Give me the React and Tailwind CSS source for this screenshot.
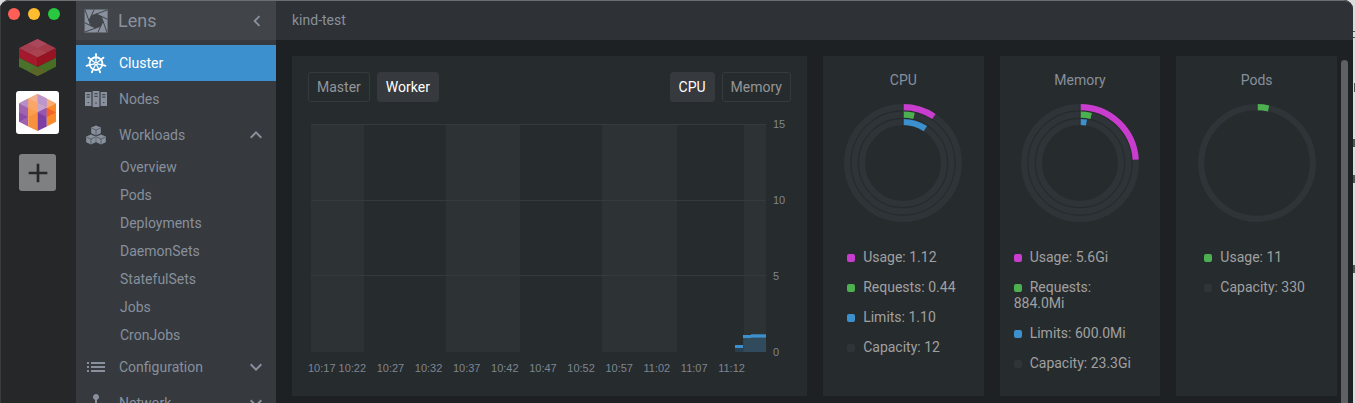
import React from "react";
import {
  MdAdd,
  MdDeviceHub,
  MdKeyboardArrowDown,
  MdKeyboardArrowLeft,
  MdKeyboardArrowUp,
  MdList,
} from "react-icons/md";

function LensLogo() {
  const blades = [0, 45, 90, 135, 180, 225, 270, 315];
  return (
    <svg viewBox="0 0 24 24" className="size-6 shrink-0" aria-hidden="true">
      <defs>
        <clipPath id="logo-square">
          <rect x="0.6" y="0.6" width="23" height="23" />
        </clipPath>
      </defs>
      <g clipPath="url(#logo-square)">
        <rect width="24" height="24" fill="#8a919e" />
        <g transform="rotate(-20 12 12)">
          <polygon points="9.3,5.5 14.7,5.5 18.5,9.3 18.5,14.7 14.7,18.5 9.3,18.5 5.5,14.7 5.5,9.3" fill="#414448" />
          {blades.map((a) => (
            <path key={a} d="M9.3 5.5H28" stroke="#414448" strokeWidth="0.9" transform={`rotate(${a} 12 12)`} />
          ))}
        </g>
      </g>
    </svg>
  );
}

function WheelIcon() {
  const spokes = [0, 1, 2, 3, 4, 5, 6];
  return (
    <svg viewBox="0 0 24 24" className="size-6" fill="none" stroke="currentColor" aria-hidden="true">
      <circle cx="12" cy="12.6" r="6.4" strokeWidth="1.9" />
      {spokes.map((i) => (
        <g key={i} transform={`rotate(${(i * 360) / 7} 12 12.6)`}>
          <path d="M12 11V2.9" strokeWidth="1.3" />
          <path d="M12 4.6V2.9" strokeWidth="1.7" strokeLinecap="round" />
        </g>
      ))}
      <circle cx="12" cy="12.6" r="1.9" fill="currentColor" stroke="none" />
      <circle cx="12" cy="12.6" r="0.7" fill="#3d90ce" stroke="none" />
    </svg>
  );
}

function ServersIcon() {
  return (
    <svg viewBox="0 0 24 24" className="size-6" fill="currentColor" aria-hidden="true">
      <rect x="1" y="5" width="6.4" height="14" rx="0.5" />
      <rect x="8.6" y="4" width="6.8" height="16" rx="0.5" />
      <rect x="16.6" y="5" width="6.4" height="14" rx="0.5" />
      <g fill="#36393e">
        <rect x="2.6" y="7.2" width="3.2" height="1" />
        <rect x="2.6" y="9.6" width="3.2" height="1" />
        <rect x="10.4" y="6.2" width="3.2" height="1" />
        <rect x="10.4" y="8.8" width="3.2" height="1" />
        <rect x="18.2" y="7.2" width="3.2" height="1" />
        <rect x="18.2" y="9.6" width="3.2" height="1" />
        <circle cx="4.2" cy="15.6" r="0.7" />
        <circle cx="12" cy="16" r="0.7" />
        <circle cx="19.8" cy="15.6" r="0.7" />
      </g>
    </svg>
  );
}

function CubesIcon() {
  const spots = ["translate(12 7.4)", "translate(7 16.4)", "translate(17 16.4)"];
  return (
    <svg viewBox="0 0 24 24" className="size-6" aria-hidden="true">
      {spots.map((t) => (
        <g key={t} transform={t}>
          <path d="M0-5 4.8-2.8V2.8L0 5-4.8 2.8V-2.8Z" fill="currentColor" />
          <path d="M-4-2.2 0-.3 4-2.2M0-.3V4.6" fill="none" stroke="#36393e" strokeWidth="0.55" />
        </g>
      ))}
    </svg>
  );
}

function RedGreenCube() {
  return (
    <svg viewBox="0 0 37 37" className="size-[37px]" aria-hidden="true">
      <path d="M18.5 0 37 9.2 18.5 18.5 0 9.2Z" fill="#a23a4a" />
      <path d="M18.5 0 27.8 4.6 18.5 9.2 9.2 4.6Z" fill="#a9485a" />
      <path d="M9.2 4.6 18.5 9.2 9.2 13.8 0 9.2Z" fill="#a33f50" />
      <path d="M18.5 9.2 27.8 13.8 18.5 18.5 9.2 13.8Z" fill="#a94350" />
      <path d="M0 9.2 18.5 18.5V28L0 18.8Z" fill="#a41a2c" />
      <path d="M37 9.2 18.5 18.5V28L37 18.8Z" fill="#981321" />
      <path d="M0 18.8 18.5 28V37L0 27.8Z" fill="#4a722a" />
      <path d="M37 18.8 18.5 28V37L37 27.8Z" fill="#466e24" />
      <path d="M9.2 32.4 18.5 28 27.8 32.4 18.5 37Z" fill="#5a6528" />
    </svg>
  );
}

function OrangePurpleCube() {
  return (
    <svg viewBox="0 0 37 37" className="size-[37px]" aria-hidden="true">
      <path d="M18.5 0 37 9.2 18.5 18.5 0 9.2Z" fill="#f9a972" />
      <path d="M18.5 0 27.8 4.6 18.5 9.2 9.2 4.6Z" fill="#f5b28c" />
      <path d="M18.5 0 27.8 4.6V13.8L18.5 9.2Z" fill="#bb96cf" />
      <path d="M9.2 4.6 18.5 9.2V18.5L9.2 13.8Z" fill="#fba668" />
      <path d="M18.5 9.2 27.8 13.8 18.5 18.5Z" fill="#c7a2cf" />
      <path d="M0 9.2 9.2 4.6V13.8Z" fill="#b48fc8" />
      <path d="M0 9.2 9.2 13.8V32.4L0 27.8Z" fill="#9f63b0" />
      <path d="M0 18.5 9.2 23 0 27.8Z" fill="#8b4ba6" />
      <path d="M9.2 13.8 18.5 18.5V37L9.2 32.4Z" fill="#f8913d" />
      <path d="M9.2 13.8 18.5 18.5 9.2 23Z" fill="#fa9e4d" />
      <path d="M18.5 18.5 27.8 13.8V32.4L18.5 37Z" fill="#7d3fa4" />
      <path d="M18.5 18.5 27.8 13.8V23Z" fill="#9656b4" />
      <path d="M27.8 13.8 37 9.2V27.8L27.8 32.4Z" fill="#f98a2c" />
      <path d="M27.8 13.8 37 18.5 27.8 23Z" fill="#f4622b" />
    </svg>
  );
}

function Rail() {
  return (
    <aside className="flex w-[76px] shrink-0 flex-col items-center border-l border-[#3a3b3d] bg-[#252729] pr-0.5">
      <div className="flex gap-2 self-start pt-2 pl-[7px]">
        <button aria-label="Close" className="size-3 rounded-full bg-[#ff5f57]" />
        <button aria-label="Minimize" className="size-3 rounded-full bg-[#febc2e]" />
        <button aria-label="Zoom" className="size-3 rounded-full bg-[#28c840]" />
      </div>
      <button aria-label="Open first cluster" className="mt-[19px]">
        <RedGreenCube />
      </button>
      <button aria-label="Open kind-test" className="mt-[15px] rounded-[3px] bg-white p-[3px]">
        <OrangePurpleCube />
      </button>
      <button
        aria-label="Add cluster"
        className="mt-5 flex size-[37px] items-center justify-center rounded-[3px] bg-[#7f8082] text-[#252729]"
      >
        <MdAdd className="size-8" />
      </button>
    </aside>
  );
}

function NavItem({ icon, label, active, arrow }) {
  return (
    <a
      href="#"
      className={
        "flex h-9 items-center gap-[11px] px-2 " + (active ? "bg-[#3d90ce] text-white" : "text-[#87909c]")
      }
    >
      <span className="flex size-6 items-center justify-center">{icon}</span>
      <span className="flex-1">{label}</span>
      {arrow}
    </a>
  );
}

const workloads = ["Overview", "Pods", "Deployments", "DaemonSets", "StatefulSets", "Jobs", "CronJobs"];

function Sidebar() {
  return (
    <nav className="flex w-[200px] shrink-0 flex-col overflow-hidden bg-[#36393e]">
      <div className="flex h-10 shrink-0 items-center bg-[#414448] px-2 pt-0.5 text-[#8a919e]">
        <LensLogo />
        <span className="flex-1 pl-2.5 text-lg">Lens</span>
        <button aria-label="Collapse sidebar">
          <MdKeyboardArrowLeft className="size-[22px]" />
        </button>
      </div>
      <div className="flex flex-col pt-[5px]">
        <NavItem icon={<WheelIcon />} label="Cluster" active />
        <NavItem icon={<ServersIcon />} label="Nodes" />
        <NavItem icon={<CubesIcon />} label="Workloads" arrow={<MdKeyboardArrowUp className="size-6" />} />
        {workloads.map((w) => (
          <a key={w} href="#" className="flex h-7 items-center pl-11 text-[#87909c]">
            {w}
          </a>
        ))}
        <NavItem
          icon={<MdList className="size-6" />}
          label="Configuration"
          arrow={<MdKeyboardArrowDown className="size-6" />}
        />
        <NavItem
          icon={<MdDeviceHub className="size-6" />}
          label="Network"
          arrow={<MdKeyboardArrowDown className="size-6" />}
        />
      </div>
    </nav>
  );
}

function Toggle({ children, active }) {
  return (
    <button
      aria-pressed={!!active}
      className={
        "h-[30px] rounded-[3px] border px-2 " +
        (active ? "border-[#36393e] bg-[#36393e] text-white" : "border-[#36393e] text-[#949698]")
      }
    >
      {children}
    </button>
  );
}

const times = ["10:22", "10:27", "10:32", "10:37", "10:42", "10:47", "10:52", "10:57", "11:02", "11:07", "11:12"];

function MetricsChart() {
  return (
    <section className="bg-[#262b2e] px-4 pt-4 pb-5">
      <div className="flex justify-between">
        <div className="flex gap-[7px]">
          <Toggle>Master</Toggle>
          <Toggle active>Worker</Toggle>
        </div>
        <div className="flex gap-[7px]">
          <Toggle active>CPU</Toggle>
          <Toggle>Memory</Toggle>
        </div>
      </div>
      <div className="mt-[22px] flex font-['Liberation_Sans',sans-serif] text-[11px] text-[#7f8590]">
        <svg
          viewBox="0 0 455 228"
          preserveAspectRatio="none"
          shapeRendering="crispEdges"
          className="ml-[3px] h-[228px] min-w-0 flex-1"
          role="img"
          aria-label="CPU usage"
        >
          <g fill="#2d3235">
            <rect x="0" y="0" width="53" height="228" />
            <rect x="135" y="0" width="74" height="228" />
            <rect x="291" y="0" width="75" height="228" />
            <rect x="433" y="0" width="22" height="228" />
          </g>
          <g fill="#36393e">
            <rect y="0" width="455" height="1" />
            <rect y="76" width="455" height="1" />
            <rect y="151" width="455" height="1" />
          </g>
          <g fill="#3d90ce">
            <rect x="424" y="223" width="8" height="5" fillOpacity="0.2" />
            <rect x="432" y="214" width="23" height="14" fillOpacity="0.26" />
            <rect x="424" y="221" width="8" height="3" />
            <rect x="432" y="211" width="8" height="3" />
            <rect x="440" y="210" width="15" height="4" fillOpacity="0.7" />
            <rect x="440" y="211" width="15" height="2" />
          </g>
        </svg>
        <div className="-my-2 flex w-[25px] flex-col justify-between pl-[7px] leading-4">
          <span>15</span>
          <span>10</span>
          <span>5</span>
          <span>0</span>
        </div>
      </div>
      <div className="mt-2 flex gap-[3px] pr-[46px] font-['Liberation_Sans',sans-serif] text-[11px] leading-4 text-[#7f8590]">
        <span>10:17</span>
        <div className="flex flex-1 justify-between">
          {times.map((t) => (
            <span key={t}>{t}</span>
          ))}
        </div>
      </div>
    </section>
  );
}

function arc(radius, share) {
  const a = share * 2 * Math.PI;
  const x = 59 + radius * Math.sin(a);
  const y = 59 - radius * Math.cos(a);
  return `M59 ${59 - radius}A${radius} ${radius} 0 ${share > 0.5 ? 1 : 0} 1 ${x} ${y}`;
}

function Gauge({ title, rings, legend }) {
  return (
    <section className="flex min-w-0 flex-col items-center bg-[#262b2e] px-3.5 pt-3.5 text-[#a0a0a0]">
      <h2 className="leading-5 text-[#87909c]">{title}</h2>
      <svg viewBox="0 0 118 118" className="mt-3.5 size-[118px]" fill="none" role="img" aria-label={title}>
        {rings.map((r, i) => (
          <g key={r.color} strokeWidth="6.2">
            <circle cx="59" cy="59" r={55.8 - i * 7.4} stroke="#2f3438" />
            <path d={arc(55.8 - i * 7.4, r.share)} stroke={r.color} />
            <path d={`M59.2 ${i * 7.4}v6.4`} stroke="#262b2e" strokeWidth="1" />
          </g>
        ))}
      </svg>
      <ul className="mt-5 flex flex-col pr-1 leading-4">
        {legend.map((l) => (
          <li key={l.text} className="my-[7px]">
            <span className={"mr-2 inline-block size-2 rounded-[2px] " + l.swatch} />
            {l.text}
          </li>
        ))}
      </ul>
    </section>
  );
}

const MAGENTA = "#c93dce";
const GREEN = "#4caf50";
const BLUE = "#3d90ce";

function DesktopEdge() {
  return (
    <svg className="h-full w-0.5 shrink-0" aria-hidden="true">
      <rect width="2" height="100%" fill="#dcdcdc" />
      <g fill="#555">
        <rect y="31" width="2" height="1" />
        <rect y="37" width="2" height="1" />
        <rect x="1" y="83" width="1" height="9" />
        <rect y="139" width="2" height="8" />
        <rect y="175" width="2" height="8" />
        <rect y="265" width="2" height="8" />
      </g>
    </svg>
  );
}

export default function App() {
  return (
    <div className="flex h-screen overflow-hidden bg-[#dcdcdc] font-[Roboto,sans-serif] text-sm">
      <div className="relative flex min-w-0 flex-1 overflow-hidden rounded-t-[9px] bg-[#1e2124]">
        <div className="pointer-events-none absolute inset-x-0 top-0 h-3 rounded-t-[9px] border-t border-[#6c6f72]" />
        <Rail />
        <Sidebar />
        <main className="flex min-w-0 flex-1 flex-col">
          <header className="flex h-10 shrink-0 items-center bg-[#2e3136] px-4 text-[#87909c]">
            kind-test
          </header>
          <div className="flex min-h-0 flex-1">
            <div className="grid min-w-0 flex-1 grid-cols-[3.2fr_1fr_1fr_1fr] content-start gap-4 pt-4 pl-4">
              <MetricsChart />
              <Gauge
                title="CPU"
                rings={[
                  { color: MAGENTA, share: 1.12 / 12 },
                  { color: GREEN, share: 0.44 / 12 },
                  { color: BLUE, share: 1.1 / 12 },
                ]}
                legend={[
                  { swatch: "bg-[#c93dce]", text: "Usage: 1.12" },
                  { swatch: "bg-[#4caf50]", text: "Requests: 0.44" },
                  { swatch: "bg-[#3d90ce]", text: "Limits: 1.10" },
                  { swatch: "bg-[#2f3438]", text: "Capacity: 12" },
                ]}
              />
              <Gauge
                title="Memory"
                rings={[
                  { color: MAGENTA, share: 5.6 / 23.3 },
                  { color: GREEN, share: 0.863 / 23.3 },
                  { color: BLUE, share: 0.586 / 23.3 },
                ]}
                legend={[
                  { swatch: "bg-[#c93dce]", text: "Usage: 5.6Gi" },
                  { swatch: "bg-[#4caf50]", text: "Requests: 884.0Mi" },
                  { swatch: "bg-[#3d90ce]", text: "Limits: 600.0Mi" },
                  { swatch: "bg-[#2f3438]", text: "Capacity: 23.3Gi" },
                ]}
              />
              <Gauge
                title="Pods"
                rings={[{ color: GREEN, share: 11 / 330 }]}
                legend={[
                  { swatch: "bg-[#4caf50]", text: "Usage: 11" },
                  { swatch: "bg-[#2f3438]", text: "Capacity: 330" },
                ]}
              />
            </div>
            <div className="w-4 pt-5 pl-1">
              <div className="h-full w-[7px] rounded-t-full bg-[#5f6064]" />
            </div>
          </div>
        </main>
      </div>
      <DesktopEdge />
    </div>
  );
}
